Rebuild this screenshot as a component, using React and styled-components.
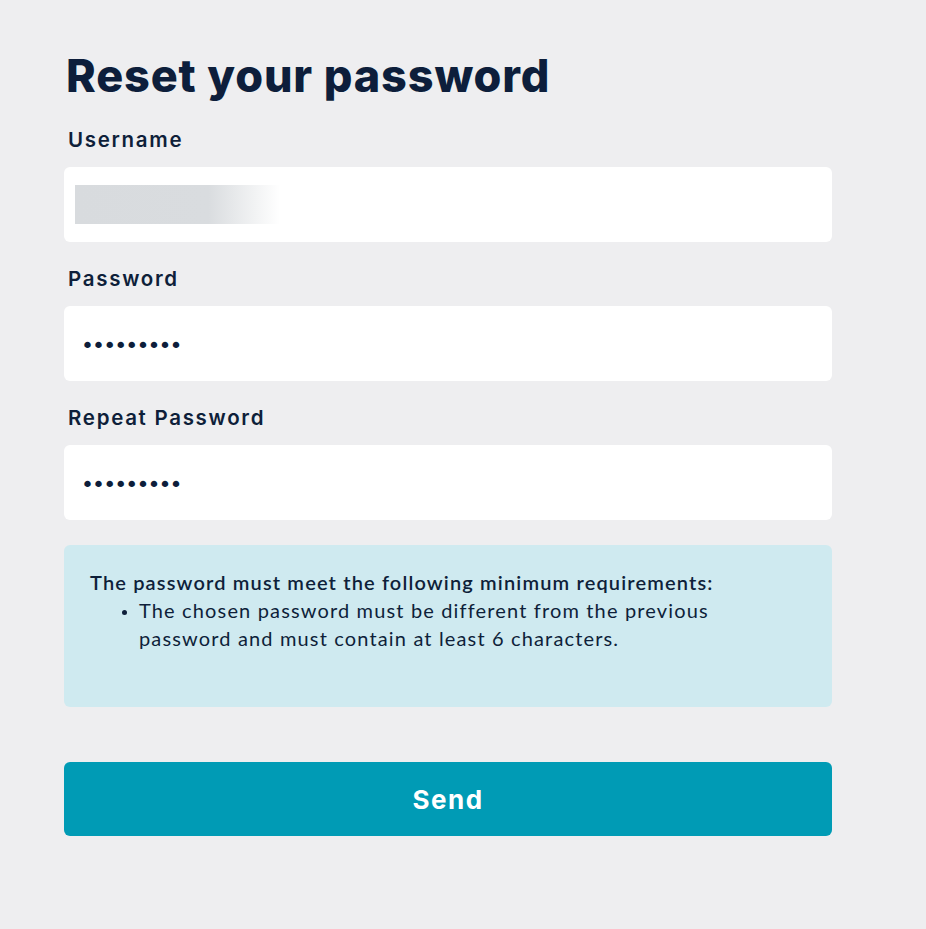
import React from "react";
import styled, { createGlobalStyle } from "styled-components";

const Global = createGlobalStyle`
  html, body { margin: 0; padding: 0; background: #eeeef0; }
  body { font-family: "Inter", "Liberation Sans", sans-serif; color: #0e1f3a; }
  * { box-sizing: border-box; }
`;

const Page = styled.main`
  min-height: 929px;
  padding: 48px 0 0 64px;
`;

const Form = styled.form`
  width: 768px;
  display: flex;
  flex-direction: column;
`;

const Title = styled.h1`
  margin: 0 0 0 2px;
  font-family: "Inter", sans-serif;
  font-weight: 800;
  font-size: 45px;
  line-height: 56px;
  letter-spacing: 0.85px;
  color: #0d1e3b;
`;

const Field = styled.div`
  display: flex;
  flex-direction: column;
  gap: 13px;
  margin-top: ${(p) => p.$top}px;
`;

const Label = styled.label`
  font-family: "Inter", sans-serif;
  font-weight: 600;
  font-size: 20.5px;
  line-height: 28px;
  letter-spacing: 1.7px;
  padding-left: 4px;
  color: #0e1f3a;
`;

const InputBox = styled.div`
  height: 75px;
  background: #ffffff;
  border-radius: 6px;
  display: flex;
  align-items: center;
  padding: 0 11px;
`;

const Blurred = styled.div`
  width: 205px;
  height: 39px;
  background: linear-gradient(90deg, #d8dbde 0%, #d9dcdf 65%, #ffffff 100%);
`;

const PasswordInput = styled.input`
  border: none;
  outline: none;
  background: transparent;
  width: 100%;
  padding: 3px 0 0 6px;
  font-family: "DejaVu Sans", sans-serif;
  font-size: 22px;
  letter-spacing: -1.9px;
  color: #0d1e3b;
`;

const Info = styled.div`
  margin-top: 25px;
  height: 162px;
  background: #cfeaf0;
  border-radius: 6px;
  padding: 23px 70px 0 26px;
  font-family: "Lato", sans-serif;
  font-size: 20px;
  line-height: 28px;
  letter-spacing: 1.15px;
  color: #0e1f3a;
`;

const InfoHead = styled.p`
  margin: 0;
  font-weight: 600;
  white-space: nowrap;
`;

const List = styled.ul`
  margin: 0;
  padding-left: 49px;
  li::marker { font-size: 15px; }
`;

const Button = styled.button`
  margin-top: 55px;
  height: 74px;
  border: none;
  border-radius: 6px;
  background: #009bb5;
  color: #ffffff;
  font-family: "Inter", sans-serif;
  font-weight: 700;
  font-size: 26px;
  letter-spacing: 1.5px;
  cursor: pointer;
`;

export default function App() {
  return (
    <>
      <Global />
      <Page>
        <Form onSubmit={(e) => e.preventDefault()}>
          <Title>Reset your password</Title>
          <Field $top={22}>
            <Label>Username</Label>
            <InputBox>
              <Blurred />
            </InputBox>
          </Field>
          <Field $top={23}>
            <Label>Password</Label>
            <InputBox>
              <PasswordInput type="password" defaultValue="abcdefghi" readOnly />
            </InputBox>
          </Field>
          <Field $top={23}>
            <Label>Repeat Password</Label>
            <InputBox>
              <PasswordInput type="password" defaultValue="abcdefghi" readOnly />
            </InputBox>
          </Field>
          <Info>
            <InfoHead>The password must meet the following minimum requirements:</InfoHead>
            <List>
              <li>
                The chosen password must be different from the previous password and must contain at least 6 characters.
              </li>
            </List>
          </Info>
          <Button type="submit">Send</Button>
        </Form>
      </Page>
    </>
  );
}
